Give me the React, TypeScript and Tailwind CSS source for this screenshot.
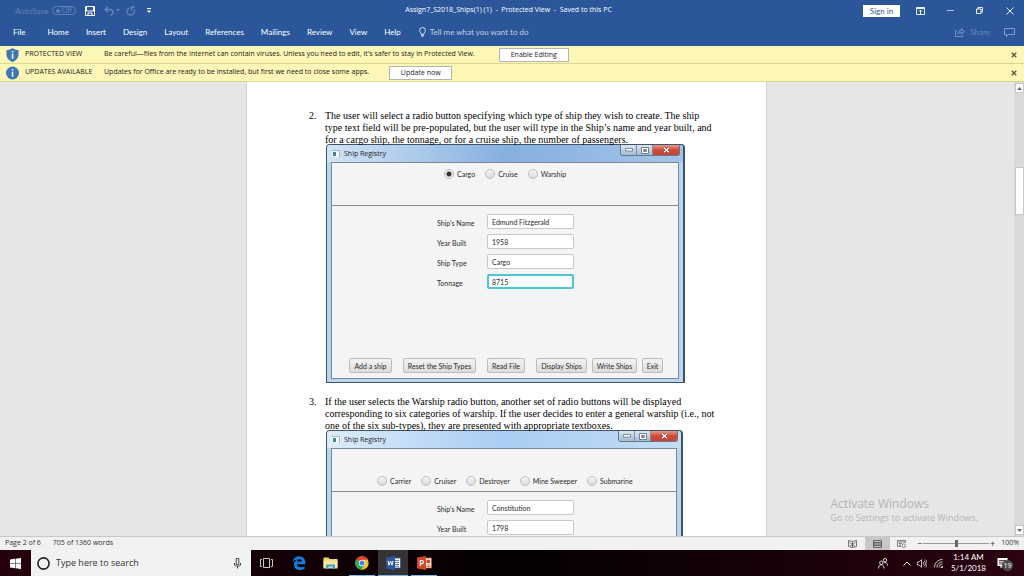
import { useState, type ReactElement, type ReactNode } from 'react';

const TABS = ['Home', 'Insert', 'Design', 'Layout', 'References', 'Mailings', 'Review', 'View', 'Help'];

function TitleBar(): ReactElement {
  return (
    <header className="grid h-[22px] shrink-0 grid-cols-[1fr_auto_1fr] items-center bg-[#2b579a] pr-[10px] pb-px pl-[15px] text-[8px] text-white">
      <div className="flex items-center">
        <span className="w-[37px] text-[#5f82b8]">AutoSave</span>
        <button
          type="button"
          className="flex h-[9px] w-[24px] items-center justify-between rounded-full border border-[#5f82b8] px-[3px] text-[7px] leading-none text-[#5f82b8]"
        >
          <span className="h-[4px] w-[4px] rounded-full bg-[#5f82b8]" />
          Off
        </button>
        <button type="button" aria-label="Save" className="ml-[9px]">
          <svg className="h-[10px] w-[10px]" viewBox="0 0 10 10" fill="none" stroke="white">
            <path d="M.5 .5h9v9h-9zM1 5h8M3 9.500V7h4v2.500" />
            <path d="M1.500 1v4M8.500 1v4" strokeWidth="1" />
          </svg>
        </button>
        <button type="button" aria-label="Undo" className="ml-[9px]">
          <svg className="h-[10px] w-[10px]" viewBox="0 0 10 10" fill="none" stroke="#6386bb" strokeWidth="1.4">
            <path d="M4 .7L1 3.500 4 6.300M1 3.500h4.500C10 3.500 10 9 6 9" />
          </svg>
        </button>
        <svg className="ml-[2px] h-[3px] w-[4px]" viewBox="0 0 4 3" fill="#6386bb">
          <path d="M0 0h4L2 2.500z" />
        </svg>
        <button type="button" aria-label="Redo" className="ml-[6px]">
          <svg className="h-[10px] w-[10px]" viewBox="0 0 10 10" fill="none" stroke="#6386bb" strokeWidth="1.3">
            <path d="M3.500 1.800A3.700 3.700 0 1 0 8 3.500M5 1h3.500M5.500 1v3.500" />
          </svg>
        </button>
        <button type="button" aria-label="Customize toolbar" className="ml-[11px]">
          <svg className="h-[6px] w-[4px]" viewBox="0 0 4 6" fill="white">
            <path d="M0 0h4v1H0zM0 2.500h4L2 5z" />
          </svg>
        </button>
      </div>
      <h1 className="pr-[12px] font-['Open_Sans',sans-serif] text-[7px] whitespace-pre">
        {'Assign7_S2018_Ships(1) (1)  -  Protected View  -  Saved to this PC'}
      </h1>
      <div className="flex items-center justify-end">
        <button type="button" className="h-[12px] w-[37px] bg-white text-[8px] leading-[12px] text-[#2b579a]">
          Sign in
        </button>
        <button type="button" aria-label="Ribbon display options" className="ml-[16px]">
          <svg className="h-[8px] w-[9px]" viewBox="0 0 9 8" fill="none" stroke="white">
            <path d="M.5 .5h8v7h-8zM.5 1.500h8M4.500 7V3M3 4.500L4.500 3 6 4.500" strokeWidth=".9" />
          </svg>
        </button>
        <button type="button" aria-label="Minimize" className="ml-[22px]">
          <svg className="h-[7px] w-[7px]" viewBox="0 0 7 7" stroke="#b5c5df">
            <path d="M0 3.500h7" />
          </svg>
        </button>
        <button type="button" aria-label="Restore" className="ml-[22px]">
          <svg className="h-[7px] w-[7px]" viewBox="0 0 7 7" fill="none" stroke="white" strokeWidth=".9">
            <path d="M.5 2h4.500v4.500H.5zM2 2V.5h4.500V5H5" />
          </svg>
        </button>
        <button type="button" aria-label="Close" className="ml-[23px]">
          <svg className="h-[8px] w-[8px]" viewBox="0 0 8 8" stroke="white" strokeWidth=".9">
            <path d="M.5 .5l7 7M7.500 .5l-7 7" />
          </svg>
        </button>
      </div>
    </header>
  );
}

function RibbonTabs(): ReactElement {
  return (
    <nav className="flex h-[24px] shrink-0 items-center bg-[#2b579a] pb-[4px] pl-[13px] pr-[9px] text-[8px] text-white">
      <button type="button" className="mr-[22px]">
        File
      </button>
      <div className="flex gap-[17px]">
        {TABS.map((tab) => (
          <button key={tab} type="button">
            {tab}
          </button>
        ))}
      </div>
      <button type="button" className="ml-[18px] flex items-center gap-[4px] text-[8px] text-[#c3cfe4]">
        <svg className="h-[10px] w-[7px]" viewBox="0 0 7 10" fill="none" stroke="white" strokeWidth=".8">
          <path d="M2.200 7.300C2.200 5.500.6 5.200.6 3.400a2.900 2.900 0 0 1 5.800 0c0 1.800-1.600 2.100-1.600 3.900zM2.200 8.300h2.600M2.700 9.500h1.600" />
        </svg>
        Tell me what you want to do
      </button>
      <button type="button" className="ml-auto flex items-center gap-[5px] text-[#6386bb]">
        <svg className="h-[9px] w-[10px]" viewBox="0 0 10 9" fill="none" stroke="#7d9ac7" strokeWidth=".9">
          <path d="M2 2.500H.5v6h7V7M3 6c0-2.500 1.500-3.500 3.500-3.500V.7L9.500 3.500 6.500 6V4.500C5 4.500 4 5 3 6z" />
        </svg>
        Share
      </button>
      <button type="button" aria-label="Comments" className="ml-[14px]">
        <svg className="h-[9px] w-[11px]" viewBox="0 0 11 9" fill="none" stroke="#8fa8cf" strokeWidth=".9">
          <path d="M.5 .5h10v6H4.500L2.500 8.500v-2h-2z" />
        </svg>
      </button>
    </nav>
  );
}

interface MessageBarProps {
  icon: ReactNode;
  title: string;
  message: string;
  action: string;
  actionClass: string;
}

function MessageBar({ icon, title, message, action, actionClass }: MessageBarProps): ReactElement {
  return (
    <div className="flex h-[18px] shrink-0 items-center border-b border-[#dcd78f] bg-[#fcf7b6] pr-[7px] pl-[6px] font-['Open_Sans',sans-serif] text-[7px] text-[#22211c]">
      {icon}
      <strong className="ml-[6px] w-[79px] font-normal whitespace-nowrap">{title}</strong>
      <span className="whitespace-nowrap">{message}</span>
      <button type="button" className={`h-[14px] border border-[#b4b4b4] bg-white leading-[12px] ${actionClass}`}>
        {action}
      </button>
      <button type="button" aria-label="Close message" className="ml-auto">
        <svg className="h-[6px] w-[6px]" viewBox="0 0 6 6" stroke="#5f5d4a" strokeWidth="1.400">
          <path d="M.7 .7l4.600 4.600M5.300 .7L.7 5.300" />
        </svg>
      </button>
    </div>
  );
}

interface RegistryWindowProps {
  id: string;
  className: string;
  titleClass: string;
  radiosClass: string;
  options: string[];
  initial?: string;
  fields: { label: string; value: string; focused?: boolean }[];
  children?: ReactNode;
}

function RegistryWindow(props: RegistryWindowProps): ReactElement {
  const { id, className, titleClass, radiosClass, options, initial, fields, children } = props;
  const [selected, setSelected] = useState(initial);
  return (
    <section
      className={`-mt-[2px] ml-px flex h-[239px] flex-col rounded-t-[4px] border border-r-2 border-[#3f5268] bg-[#b9d6f0] px-[4px] pb-[3px] font-['Lato','Open_Sans',sans-serif] text-[7px] text-[#2b2b2b] ${className}`}
    >
      <div className={`-mx-[4px] flex h-[17px] shrink-0 items-start rounded-t-[3px] pl-[5px] pr-[3px] ${titleClass}`}>
        <svg className="mt-[5px] h-[7px] w-[8px]" viewBox="0 0 8 7">
          <path d="M0 0h8v7H0z" fill="#f4f7fa" />
          <path d="M0 0h8v1H0zM7 1h1v6H7z" fill="#a8b4c0" />
          <path d="M1 2h3v4H1z" fill="#3f8a76" />
        </svg>
        <h2 className="ml-[4px] mt-[3px] font-['Open_Sans',sans-serif] text-[7px] leading-[11px] text-[#222]">
          Ship Registry
        </h2>
        <div className="ml-auto flex h-[11px] overflow-hidden rounded-b-[3px] border border-t-0 border-[#62788f]">
          <button
            type="button"
            aria-label="Minimize"
            className="flex w-[16px] items-center justify-center border-r border-[#7d90a6] bg-linear-to-b from-[#dce7f3] to-[#a5bad2]"
          >
            <svg className="h-[4px] w-[8px]" viewBox="0 0 8 4">
              <path d="M.5 .5h7v2.500h-7z" fill="white" stroke="#5b6673" strokeWidth=".7" />
            </svg>
          </button>
          <button
            type="button"
            aria-label="Maximize"
            className="flex w-[16px] items-center justify-center border-r border-[#7d90a6] bg-linear-to-b from-[#dce7f3] to-[#a5bad2]"
          >
            <svg className="h-[7px] w-[8px]" viewBox="0 0 8 7">
              <path d="M.5 .5h7v6h-7z" fill="white" stroke="#5b6673" strokeWidth=".8" />
              <path d="M2.700 2.500h2.600v2H2.700z" fill="#8fa3ba" stroke="#5b6673" strokeWidth=".8" />
            </svg>
          </button>
          <button
            type="button"
            aria-label="Close"
            className="flex w-[26px] items-center justify-center bg-linear-to-b from-[#e39a8c] via-[#cf4a35] to-[#c8452f]"
          >
            <svg className="h-[6px] w-[7px]" viewBox="0 0 7 6">
              <path d="M1 .8l5 4.400M6 .8L1 5.200" stroke="#6f3a36" strokeWidth="2.600" />
              <path d="M1 .8l5 4.400M6 .8L1 5.200" stroke="white" strokeWidth="1.500" />
            </svg>
          </button>
        </div>
      </div>
      <div className="flex grow flex-col border border-[#7b8794] bg-[#f4f4f4]">
        <fieldset className={`flex h-[43px] shrink-0 gap-[10px] border-b border-[#8b8b8b] ${radiosClass}`}>
          {options.map((option) => (
            <label key={option} className="flex h-[10px] items-center gap-[3px] whitespace-nowrap">
              <input
                type="radio"
                name={id}
                checked={selected === option}
                onChange={() => setSelected(option)}
                className="h-[10px] w-[10px] appearance-none rounded-full border border-[#bdbdbd] bg-linear-to-b from-[#f6f6f6] to-[#dadada] checked:bg-[radial-gradient(circle,#333_2px,#eee_3px)]"
              />
              {option}
            </label>
          ))}
        </fieldset>
        <div className="flex flex-col gap-[5px] pt-[8px] pl-[105px]">
          {fields.map((field) => (
            <div key={field.label} className="flex h-[15px] items-center">
              <label htmlFor={`${id}-${field.label}`} className="w-[50px] pt-[2px] whitespace-nowrap">
                {field.label}
              </label>
              <input
                id={`${id}-${field.label}`}
                type="text"
                defaultValue={field.value}
                className={
                  field.focused
                    ? 'h-[15px] w-[87px] rounded-[2px] border-2 border-[#4fc3dc] bg-white pl-[3px]'
                    : 'h-[15px] w-[87px] rounded-[2px] border border-[#c8c8c8] bg-white pl-[4px]'
                }
              />
            </div>
          ))}
        </div>
        {children}
      </div>
    </section>
  );
}

function WindowButton({ className, children }: { className: string; children: ReactNode }): ReactElement {
  return (
    <button
      type="button"
      className={`h-[15px] rounded-[2px] border border-[#bcbcbc] bg-linear-to-b from-[#f3f3f3] to-[#dcdcdc] leading-[12px] whitespace-nowrap ${className}`}
    >
      {children}
    </button>
  );
}

function Step({ number, text, children }: { number: number; text: string; children: ReactNode }): ReactElement {
  return (
    <li className="flex">
      <span className="w-[16px] shrink-0">{number}.</span>
      <div>
        <p className="whitespace-pre">{text}</p>
        {children}
      </div>
    </li>
  );
}

function DocumentPage(): ReactElement {
  return (
    <article className="w-[521px] shrink-0 overflow-hidden border-x border-[#d4d4d4] bg-white pl-[62px] pt-[28px] font-['Liberation_Serif',serif] text-[10px] leading-[12px] text-black">
      <ol className="flex flex-col gap-[13px]">
        <Step
          number={2}
          text={
            'The user will select a radio button specifying which type of ship they wish to create. The ship\n' +
            'type text field will be pre-populated, but the user will type in the Ship’s name and year built, and\n' +
            'for a cargo ship, the tonnage, or for a cruise ship, the number of passengers.'
          }
        >
          <RegistryWindow
            id="cargo"
            className="w-[359px]"
            titleClass="bg-linear-to-r from-[#d3e4f4] via-[#86b0e0] to-[#a3c4e8]"
            radiosClass="pt-[6px] pl-[112px]"
            options={['Cargo', 'Cruise', 'Warship']}
            initial="Cargo"
            fields={[
              { label: "Ship's Name", value: 'Edmund Fitzgerald' },
              { label: 'Year Built', value: '1958' },
              { label: 'Ship Type', value: 'Cargo' },
              { label: 'Tonnage', value: '8715', focused: true },
            ]}
          >
            <div className="mt-auto flex gap-[11px] pb-[5px] pl-[17px]">
              <WindowButton className="w-[43px]">Add a ship</WindowButton>
              <WindowButton className="w-[73px]">Reset the Ship Types</WindowButton>
              <WindowButton className="w-[38px]">Read File</WindowButton>
              <div className="flex gap-[5px]">
                <WindowButton className="w-[51px]">Display Ships</WindowButton>
                <WindowButton className="w-[45px]">Write Ships</WindowButton>
                <WindowButton className="w-[21px]">Exit</WindowButton>
              </div>
            </div>
          </RegistryWindow>
        </Step>
        <Step
          number={3}
          text={
            'If the user selects the Warship radio button, another set of radio buttons will be displayed\n' +
            'corresponding to six categories of warship. If the user decides to enter a general warship (i.e., not\n' +
            'one of the six sub-types), they are presented with appropriate textboxes.'
          }
        >
          <RegistryWindow
            id="warship"
            className="w-[357px]"
            titleClass="bg-linear-to-r from-[#dcebf9] via-[#a9cdf3] to-[#c3ddf6]"
            radiosClass="pt-[27px] pl-[45px]"
            options={['Carrier', 'Cruiser', 'Destroyer', 'Mine Sweeper', 'Submarine']}
            fields={[
              { label: "Ship's Name", value: 'Constitution' },
              { label: 'Year Built', value: '1798' },
            ]}
          />
        </Step>
      </ol>
    </article>
  );
}

function ScrollBar(): ReactElement {
  return (
    <div className="flex w-[11px] shrink-0 flex-col items-center border-l border-[#e6e6e6] bg-[#dadada] py-[1px]">
      <button
        type="button"
        aria-label="Scroll up"
        className="flex h-[10px] w-[9px] items-center justify-center border border-[#c6c6c6] bg-white"
      >
        <svg className="h-[3px] w-[5px]" viewBox="0 0 5 3" fill="#666">
          <path d="M0 3h5L2.500 0z" />
        </svg>
      </button>
      <div className="mt-[74px] h-[48px] w-[9px] border border-[#c6c6c6] bg-white" />
      <button
        type="button"
        aria-label="Scroll down"
        className="mt-auto flex h-[10px] w-[9px] items-center justify-center border border-[#c6c6c6] bg-white"
      >
        <svg className="h-[3px] w-[5px]" viewBox="0 0 5 3" fill="#666">
          <path d="M0 0h5L2.500 3z" />
        </svg>
      </button>
    </div>
  );
}

function StatusBar(): ReactElement {
  return (
    <footer className="flex h-[14px] shrink-0 items-center border-t border-[#c8c8c8] bg-[#f1f1f1] px-[5px] font-['Open_Sans',sans-serif] text-[7px] text-[#333]">
      <span>Page 2 of 6</span>
      <span className="ml-[12px]">705 of 1360 words</span>
      <div className="ml-auto flex h-full items-center">
        <button type="button" aria-label="Read mode" className="mr-[8px]">
          <svg className="h-[8px] w-[9px]" viewBox="0 0 9 8" fill="none" stroke="#555" strokeWidth=".8">
            <path d="M4.500 1.500L.5 .5v6l4 1 4-1v-6zM4.500 1.500v6M1.500 2.500L7 6M7.500 2.500L2 6" />
          </svg>
        </button>
        <button
          type="button"
          aria-label="Print layout"
          className="flex h-full w-[25px] items-center justify-center bg-[#c8c8c8]"
        >
          <svg className="h-[8px] w-[9px]" viewBox="0 0 9 8" fill="none" stroke="#555" strokeWidth=".9">
            <path d="M.5 .5h8v7h-8zM1 2.500h7M1 4h7M1 5.500h7" />
          </svg>
        </button>
        <button type="button" aria-label="Web layout" className="ml-[7px]">
          <svg className="h-[8px] w-[9px]" viewBox="0 0 9 8" fill="none" stroke="#666" strokeWidth=".8">
            <path d="M4 6.500H.5v-6h8V3M.5 2h8M2 3.500h3M2 5h2" />
            <circle cx="6.700" cy="5.700" r="1.800" />
          </svg>
        </button>
        <span className="ml-[11px] text-[9px] leading-none">−</span>
        <input
          type="range"
          aria-label="Zoom"
          defaultValue={50}
          className="mx-[1px] h-[9px] w-[66px] appearance-none bg-[linear-gradient(#999,#999)] bg-[length:100%_1px] bg-center bg-no-repeat [&::-webkit-slider-thumb]:h-[7px] [&::-webkit-slider-thumb]:w-[3px] [&::-webkit-slider-thumb]:appearance-none [&::-webkit-slider-thumb]:bg-[#666]"
        />
        <span className="text-[9px] leading-none">+</span>
        <output className="ml-[6px]">100%</output>
      </div>
    </footer>
  );
}

function Taskbar(): ReactElement {
  return (
    <div className="flex h-[26px] shrink-0 items-center bg-linear-to-r from-[#27000f] via-[#050003] via-50% to-[#2c0413] font-['Open_Sans',sans-serif] text-white">
      <button type="button" aria-label="Start" className="flex h-full w-[31px] items-center justify-center">
        <svg className="h-[11px] w-[11px]" viewBox="0 0 11 11" fill="white">
          <path d="M0 1.500L5 .8v4.400H0zM5.500 .7L11 0v5.200H5.500zM0 5.800h5v4.400L0 9.500zM5.500 5.800H11V11l-5.500-.7z" />
        </svg>
      </button>
      <label className="flex h-full w-[220px] items-center bg-[#f2f2f2] pl-[6px] pr-[10px]">
        <svg className="h-[13px] w-[13px]" viewBox="0 0 13 13" fill="none" stroke="#222" strokeWidth="1.600">
          <circle cx="6.500" cy="6.500" r="5.600" />
        </svg>
        <input
          type="text"
          aria-label="Search"
          placeholder="Type here to search"
          className="ml-[6px] min-w-0 grow bg-transparent text-[9px] placeholder:text-[#333]"
        />
        <svg className="h-[11px] w-[7px]" viewBox="0 0 7 11" fill="none" stroke="#333" strokeWidth=".9">
          <path d="M2.200 .5h2.600v6H2.200zM.5 5v2c0 1.500 6 1.500 6 0V5M3.500 8v2.500" />
        </svg>
      </label>
      <button type="button" aria-label="Task view" className="ml-[9px]">
        <svg className="h-[10px] w-[13px]" viewBox="0 0 13 10" fill="none" stroke="#ddd" strokeWidth=".9">
          <path d="M3.500 .5h6v9h-6zM2 1.500H.5v7H2M11 1.500h1.500v7H11" />
        </svg>
      </button>
      <button type="button" aria-label="Edge" className="ml-[19px]">
        <svg className="h-[14px] w-[14px]" viewBox="0 0 24 24" fill="#0f7ddb">
          <path d="M1 11C2 4 6.500.5 12 .5c7 0 11 5 11 11V14H8.500c.2 3.500 3 5.200 6.500 5.200 2.500 0 4.800-.7 6.500-1.800v4.800C19.500 23.400 17 24 14.200 24 7.500 24 3.500 20 3.500 14.500c0-3.700 2-6.800 5.500-8.500C5.500 6 3 8 1 11zm7.600-1.500H17C17 6.600 15.500 5 13 5c-2.400 0-4 1.800-4.400 4.500z" />
        </svg>
      </button>
      <button type="button" aria-label="File Explorer" className="ml-[17px]">
        <svg className="h-[12px] w-[15px]" viewBox="0 0 15 12">
          <path d="M.5 .5h5l1 1.500h8v9.500H.5z" fill="#f6d672" />
          <path d="M.5 3.500h14v7H.5z" fill="#fbe79a" />
          <path d="M3 12V7.500h9V12H9.500V9.500h-4V12z" fill="#35a4dc" />
        </svg>
      </button>
      <button
        type="button"
        aria-label="Chrome"
        className="ml-[11px] flex h-full w-[26px] items-center justify-center border-b border-[#76b9ed]"
      >
        <svg className="h-[14px] w-[14px]" viewBox="0 0 24 24">
          <circle cx="12" cy="12" r="11.500" fill="#fbc116" />
          <path d="M12 12L2 6.300A11.500 11.500 0 0 1 22.200 6.500H12z" fill="#e33b2e" />
          <path d="M12 12L2 6.200A11.500 11.500 0 0 0 11 23.500L16.800 14.500z" fill="#2da94f" />
          <circle cx="12" cy="12" r="5.500" fill="white" />
          <circle cx="12" cy="12" r="4.300" fill="#4285f4" />
        </svg>
      </button>
      <button
        type="button"
        aria-label="Word"
        className="ml-[3px] flex h-full w-[30px] items-center justify-center border-b border-[#76b9ed] bg-[#353235]"
      >
        <svg className="h-[14px] w-[15px]" viewBox="0 0 15 14">
          <path d="M8 2h6.500v10H8z" fill="white" stroke="#2b579a" strokeWidth=".8" />
          <path d="M9 4.500h4M9 6.500h4M9 8.500h4M9 10.200h4" stroke="#2b579a" strokeWidth=".8" />
          <path d="M0 1.500L9 0v14l-9-1.500z" fill="#2b579a" />
          <path d="M2 4.800l1 4.400 1.500-4.200L6 9.200l1-4.400" fill="none" stroke="white" />
        </svg>
      </button>
      <button
        type="button"
        aria-label="PowerPoint"
        className="ml-[3px] flex h-full w-[26px] items-center justify-center border-b border-[#76b9ed]"
      >
        <svg className="h-[14px] w-[15px]" viewBox="0 0 15 14">
          <path d="M8 2h6.500v10H8z" fill="white" stroke="#d24726" strokeWidth=".8" />
          <path d="M9.500 9h4M9.500 10.500h4" stroke="#d24726" strokeWidth=".8" />
          <circle cx="11.300" cy="5.500" r="2" fill="#d24726" />
          <path d="M0 1.500L9 0v14l-9-1.500z" fill="#d24726" />
          <path d="M3.300 10V4.500h1.500c2.200 0 2.200 3.200 0 3.200H3.300" fill="none" stroke="white" strokeWidth="1.200" />
        </svg>
      </button>
      <div className="ml-auto flex items-center pr-[11px]">
        <svg className="h-[11px] w-[10px]" viewBox="0 0 10 11" fill="none" stroke="#eee" strokeWidth=".9">
          <circle cx="3.300" cy="4.800" r="1.700" />
          <path d="M.5 10.500c0-5 5.600-5 5.600 0" />
          <circle cx="7" cy="2.200" r="1.700" />
          <path d="M5.800 5.200c1.500-1.500 3.700-.5 3.700 2.500" />
        </svg>
        <svg className="ml-[15px] h-[5px] w-[8px]" viewBox="0 0 8 5" fill="none" stroke="white">
          <path d="M.5 4.500L4 1l3.500 3.500" />
        </svg>
        <svg className="ml-[6px] h-[9px] w-[10px]" viewBox="0 0 10 9" fill="none" stroke="#eee" strokeWidth=".8">
          <path d="M.5 3v3H2l2.500 2.300V.7L2 3zM6 3c.8.8.8 2.200 0 3M7.300 1.800c1.500 1.500 1.500 3.900 0 5.400M8.500 .6c2 2 2 5.800 0 7.800" />
        </svg>
        <svg className="ml-[7px] h-[9px] w-[9px]" viewBox="0 0 9 9" fill="none" stroke="#ddd" strokeWidth=".9">
          <path d="M.5 8.500C.5 4 4 .5 8.500 .5M2.800 8.500c0-3 2.700-5.700 5.700-5.700M5 8.500C5 6.500 6.500 5 8.500 5" />
          <path d="M7 8.500L8.500 7v1.500z" fill="#ddd" />
        </svg>
        <time className="ml-[8px] text-center font-['Lato',sans-serif] text-[8px] leading-[11px] whitespace-nowrap">
          1:14 AM
          <br />
          5/1/2018
        </time>
        <button type="button" aria-label="Notifications" className="relative ml-[11px] h-[14px] w-[16px]">
          <svg className="h-[11px] w-[11px]" viewBox="0 0 11 11">
            <path d="M.5 0h10v8H6l-2.500 2.500V8h-3z" fill="white" />
            <path d="M2 2.500h7M2 4.200h7M2 6h7" stroke="#3a1522" strokeWidth=".8" />
          </svg>
          <span className="absolute top-[4px] right-0 flex h-[11px] w-[11px] items-center justify-center rounded-full bg-[#4b4b4b] text-[7px] leading-none">
            19
          </span>
        </button>
      </div>
    </div>
  );
}

export default function App(): ReactElement {
  return (
    <div className="flex h-screen flex-col overflow-hidden font-['Lato','Open_Sans',sans-serif]">
      <TitleBar />
      <RibbonTabs />
      <MessageBar
        icon={
          <svg className="h-[14px] w-[13px]" viewBox="0 0 13 14">
            <path
              d="M6.500 0C8.500 1.500 10.500 2 12.500 2v4.500c0 3.500-2.500 6-6 7.500-3.500-1.500-6-4-6-7.500V2c2 0 4-.5 6-2z"
              fill="#3f76b5"
            />
            <path d="M5.800 3h1.500v1.600H5.800zM5.800 5.700h1.500v5H5.800z" fill="white" />
          </svg>
        }
        title="PROTECTED VIEW"
        message="Be careful—files from the Internet can contain viruses. Unless you need to edit, it's safer to stay in Protected View."
        action="Enable Editing"
        actionClass="ml-[24px] w-[70px]"
      />
      <MessageBar
        icon={
          <svg className="h-[14px] w-[13px]" viewBox="0 0 13 14">
            <circle cx="6.500" cy="7" r="6.500" fill="#3f76b5" />
            <path d="M5.800 3h1.500v1.600H5.800zM5.800 5.700h1.500v5H5.800z" fill="white" />
          </svg>
        }
        title="UPDATES AVAILABLE"
        message="Updates for Office are ready to be installed, but first we need to close some apps."
        action="Update now"
        actionClass="ml-[20px] w-[63px]"
      />
      <main className="relative flex min-h-0 grow bg-[#e6e6e6]">
        <div className="flex min-w-0 grow justify-center overflow-hidden">
          <DocumentPage />
        </div>
        <ScrollBar />
        <div className="pointer-events-none absolute right-[46px] bottom-[12px] font-['Open_Sans',sans-serif] text-[#b4b4b4]">
          <p className="text-[12px] leading-[16px]">Activate Windows</p>
          <p className="text-[9px] leading-[12px]">Go to Settings to activate Windows.</p>
        </div>
      </main>
      <StatusBar />
      <Taskbar />
    </div>
  );
}
